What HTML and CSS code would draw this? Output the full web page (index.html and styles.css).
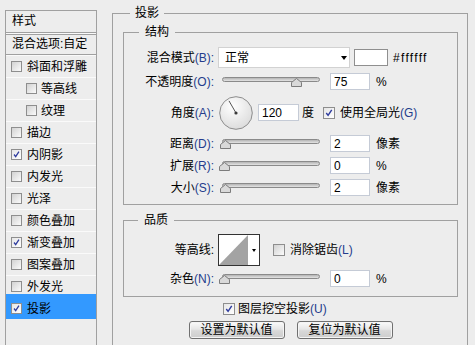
FILE: index.html
```html
<!DOCTYPE html>
<html lang="zh-CN">
<head>
    <meta charset="UTF-8" />
    <meta name="viewport" content="width=device-width, initial-scale=1.0" />
    <title>图层样式 - 投影</title>
    <link rel="stylesheet" href="styles.css">
</head>
<body>
    <div class="dialog">
        <div class="style-list">
            <div class="list-head">样式</div>
            <div class="list-blend">混合选项:自定</div>
            <div class="list-item"><span class="check"></span>斜面和浮雕</div>
            <div class="list-item sub"><span class="check"></span>等高线</div>
            <div class="list-item sub"><span class="check"></span>纹理</div>
            <div class="list-item"><span class="check"></span>描边</div>
            <div class="list-item"><span class="check on"><svg viewBox="0 0 11 11"><path d="M2.5 5.5l2 2.6 4-6" /></svg></span>内阴影</div>
            <div class="list-item"><span class="check"></span>内发光</div>
            <div class="list-item"><span class="check"></span>光泽</div>
            <div class="list-item"><span class="check"></span>颜色叠加</div>
            <div class="list-item"><span class="check on"><svg viewBox="0 0 11 11"><path d="M2.5 5.5l2 2.6 4-6" /></svg></span>渐变叠加</div>
            <div class="list-item"><span class="check"></span>图案叠加</div>
            <div class="list-item"><span class="check"></span>外发光</div>
            <div class="list-item active"><span class="check on"><svg viewBox="0 0 11 11"><path d="M2.5 5.5l2 2.6 4-6" /></svg></span>投影</div>
        </div>

        <fieldset class="group">
            <legend>投影</legend>

            <fieldset class="box structure">
                <legend>结构</legend>
                <div class="row row-blend">
                    <span class="lbl">混合模式<span class="key">(B):</span></span>
                    <div class="select">正常<span class="caret"></span></div>
                    <div class="swatch"></div>
                    <span class="hex">#ffffff</span>
                </div>
                <div class="row">
                    <span class="lbl">不透明度<span class="key">(O):</span></span>
                    <div class="slider"><div class="track"><span class="thumb" style="--v: 75%"><svg viewBox="0 0 11 9"><path d="M0.5 8.5v-4l5-4 5 4v4z" /></svg></span></div></div>
                    <input class="num" type="text" value="75">
                    <span class="unit">%</span>
                </div>
                <div class="row row-angle">
                    <span class="lbl">角度<span class="key">(A):</span></span>
                    <svg class="dial" viewBox="0 0 34 34">
                        <defs>
                            <radialGradient id="dialFill" cx="0.4" cy="0.3" r="0.8">
                                <stop offset="0" stop-color="#ffffff" />
                                <stop offset="1" stop-color="#d8d8d8" />
                            </radialGradient>
                        </defs>
                        <circle cx="17" cy="17" r="16.3" fill="url(#dialFill)" stroke="#8c8c8c" />
                        <line x1="17" y1="17" x2="10" y2="4.9" stroke="#555" stroke-width="1" />
                        <circle cx="17" cy="17" r="1.6" fill="#3a3a3a" />
                    </svg>
                    <input class="num num-angle" type="text" value="120">
                    <span class="unit unit-deg">度</span>
                    <span class="check lg on"><svg viewBox="0 0 11 11"><path d="M2.5 5.5l2 2.6 4-6" /></svg></span>
                    <span class="check-text">使用全局光<span class="key">(G)</span></span>
                </div>
                <div class="row">
                    <span class="lbl">距离<span class="key">(D):</span></span>
                    <div class="slider"><div class="track"><span class="thumb" style="--v: 1%"><svg viewBox="0 0 11 9"><path d="M0.5 8.5v-4l5-4 5 4v4z" /></svg></span></div></div>
                    <input class="num" type="text" value="2">
                    <span class="unit">像素</span>
                </div>
                <div class="row">
                    <span class="lbl">扩展<span class="key">(R):</span></span>
                    <div class="slider"><div class="track"><span class="thumb" style="--v: 0%"><svg viewBox="0 0 11 9"><path d="M0.5 8.5v-4l5-4 5 4v4z" /></svg></span></div></div>
                    <input class="num" type="text" value="0">
                    <span class="unit">%</span>
                </div>
                <div class="row">
                    <span class="lbl">大小<span class="key">(S):</span></span>
                    <div class="slider"><div class="track"><span class="thumb" style="--v: 1%"><svg viewBox="0 0 11 9"><path d="M0.5 8.5v-4l5-4 5 4v4z" /></svg></span></div></div>
                    <input class="num" type="text" value="2">
                    <span class="unit">像素</span>
                </div>
            </fieldset>

            <fieldset class="box quality">
                <legend>品质</legend>
                <div class="row row-contour">
                    <span class="lbl">等高线:</span>
                    <div class="contour">
                        <svg class="curve" viewBox="0 0 29 30"><path d="M0 30L29 0V30z" fill="#a3a3a3" /></svg>
                        <span class="contour-arrow"></span>
                    </div>
                    <span class="check lg aa"></span>
                    <span class="check-text">消除锯齿<span class="key">(L)</span></span>
                </div>
                <div class="row">
                    <span class="lbl">杂色<span class="key">(N):</span></span>
                    <div class="slider"><div class="track"><span class="thumb" style="--v: 0%"><svg viewBox="0 0 11 9"><path d="M0.5 8.5v-4l5-4 5 4v4z" /></svg></span></div></div>
                    <input class="num" type="text" value="0">
                    <span class="unit">%</span>
                </div>
            </fieldset>

            <div class="knockout">
                <span class="check lg on"><svg viewBox="0 0 11 11"><path d="M2.5 5.5l2 2.6 4-6" /></svg></span>
                <span class="check-text">图层挖空投影<span class="key">(U)</span></span>
            </div>

            <div class="btn-container">
                <button class="btn">设置为默认值</button>
                <button class="btn">复位为默认值</button>
            </div>
        </fieldset>
    </div>
</body>
</html>
```

FILE: styles.css
```css
html, body {
    margin: 0;
    padding: 0;
    height: 345px;
    overflow: hidden;
}

body {
    background-color: #ededed;
    color: #000;
    font-family: "Liberation Sans", "Noto Sans CJK SC", sans-serif;
    font-size: 12px;
    line-height: 14px;
}

.dialog {
    display: flex;
    align-items: flex-start;
    height: 345px;
    box-sizing: border-box;
    overflow: hidden;
    padding: 6px 0 0 5px;
}

/* left list of styles */
.style-list {
    width: 90px;
    height: 400px;
    margin-top: 4px;
    border: 1px solid #a0a0a0;
    flex-shrink: 0;
}

.list-head {
    height: 21px;
    line-height: 21px;
    padding-left: 6px;
    border-bottom: 1px solid #a0a0a0;
}

.list-blend {
    height: 20px;
    line-height: 20px;
    padding-left: 6px;
    border-top: 1px solid #fafafa;
    border-bottom: 1px solid #a0a0a0;
    box-shadow: inset 0 1px 0 #a0a0a0;
    white-space: nowrap;
}

.list-item {
    height: 21px;
    display: flex;
    align-items: center;
    gap: 5px;
    padding-left: 5px;
    border-top: 1px solid #fafafa;
    white-space: nowrap;
}

.list-item.sub {
    padding-left: 20px;
    gap: 4px;
}

.list-item.active {
    background-color: #3399ff;
    border-top-color: #3399ff;
    margin-top: -3px;
    padding-top: 3px;
}

/* checkboxes */
.check {
    width: 11px;
    height: 11px;
    box-sizing: border-box;
    border: 1px solid #8e8e8e;
    background: linear-gradient(135deg, #d2d2d2, #fbfbfb);
    flex-shrink: 0;
    display: inline-flex;
}

.check.lg {
    width: 12px;
    height: 12px;
}

.check.on {
    background: linear-gradient(135deg, #e6e6e6, #ffffff);
}

.check svg {
    width: 100%;
    height: 100%;
}

.check svg path {
    fill: none;
    stroke: #2f3c9e;
    stroke-width: 1.6;
}

.key {
    color: #243c8c;
}

/* group boxes */
.group {
    margin: 0 0 0 15px;
    padding: 5px 9px 0 10px;
    width: 335px;
    height: 360px;
    border: 1px solid #a0a0a0;
    min-width: 0;
    flex-shrink: 0;
}

.group > legend {
    padding: 0 5px;
    margin-left: 7px;
    line-height: 14px;
}

.box {
    margin: 0;
    padding: 0;
    border: 1px solid #a0a0a0;
    min-width: 0;
}

.box > legend {
    padding: 0 6px;
    margin-left: 15px;
    line-height: 14px;
}

.structure {
    display: flex;
    flex-direction: column;
    gap: 5px;
    padding: 8px 0 8px;
}

.quality {
    margin-top: 8px;
    padding: 7px 0 9px;
}

.quality > legend {
    margin-left: 14px;
}

.row {
    display: flex;
    align-items: center;
    height: 17px;
    white-space: nowrap;
}

.row-blend {
    height: 21px;
}

.row-angle {
    height: 35px;
}

.row-contour {
    height: 32px;
    margin-bottom: 4px;
}

.lbl {
    width: 90px;
    margin-right: 4px;
    text-align: right;
    flex-shrink: 0;
}

/* blend mode select */
.select {
    width: 132px;
    height: 21px;
    box-sizing: border-box;
    border: 1px solid #d2d2d2;
    background-color: #fff;
    padding-left: 6px;
    display: flex;
    align-items: center;
}

.caret {
    margin-left: auto;
    margin-right: 2px;
    width: 0;
    height: 0;
    border-top: 4px solid #000;
    border-left: 3.5px solid transparent;
    border-right: 3.5px solid transparent;
}

.swatch {
    width: 34px;
    height: 17px;
    box-sizing: border-box;
    margin-left: 4px;
    border: 1px solid #8f8f8f;
    background-color: #fff;
}

.hex {
    margin-left: 5px;
    letter-spacing: 1.3px;
}

/* sliders */
.slider {
    width: 106px;
    height: 17px;
    flex-shrink: 0;
}

.track {
    position: relative;
    margin: 4px 4px 0;
    height: 5px;
    box-sizing: border-box;
    border: 1px solid #8a8a8a;
    border-radius: 3px;
    background: linear-gradient(#b4b4b4, #e4e4e4);
}

.thumb {
    position: absolute;
    top: 0;
    left: calc(var(--v) - 4px);
    width: 11px;
    height: 9px;
}

.thumb svg {
    display: block;
    width: 11px;
    height: 9px;
}

.thumb svg path {
    fill: #d9d9d9;
    stroke: #7c7c7c;
    stroke-width: 1;
}

.num {
    width: 40px;
    height: 17px;
    box-sizing: border-box;
    margin: 0 0 0 6px;
    padding: 0 0 0 3px;
    border: 1px solid #c5cbd6;
    background-color: #fff;
    font: inherit;
    line-height: 15px;
    color: #000;
    outline: none;
}

.unit {
    margin-left: 6px;
}

/* angle */
.dial {
    width: 34px;
    height: 34px;
    margin-left: 1px;
    flex-shrink: 0;
}

.num-angle {
    width: 41px;
    margin-left: 5px;
}

.unit-deg {
    margin-left: 3px;
    margin-right: 9px;
}

.check-text {
    margin-left: 5px;
}

/* contour */
.contour {
    width: 42px;
    height: 32px;
    box-sizing: border-box;
    border: 1px solid #333;
    background-color: #fff;
    display: flex;
}

.curve {
    width: 29px;
    height: 30px;
    display: block;
}

.contour-arrow {
    margin: 14px auto 0;
    width: 0;
    height: 0;
    border-top: 3px solid #000;
    border-left: 2.5px solid transparent;
    border-right: 2.5px solid transparent;
}

.check.aa {
    margin-left: 13px;
}

/* bottom */
.knockout {
    display: flex;
    align-items: center;
    height: 17px;
    margin-top: 3px;
    padding-left: 100px;
    white-space: nowrap;
}

.knockout .check-text {
    margin-left: 3px;
}

.btn-container {
    display: flex;
    justify-content: center;
    gap: 12px;
    margin-top: 4px;
}

.btn {
    width: 96px;
    height: 18px;
    padding: 0;
    border: 1px solid #707070;
    border-radius: 3px;
    background: linear-gradient(#fbfbfb, #e6e6e6 45%, #d8d8d8 55%, #cdcdcd);
    box-shadow: inset 0 0 0 1px #f4f4f4;
    font: inherit;
    line-height: 16px;
    color: #000;
}
```
